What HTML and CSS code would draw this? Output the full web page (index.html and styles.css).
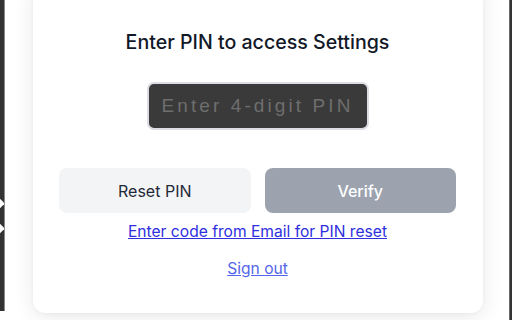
FILE: index.html
```html
<!DOCTYPE html>
<html>
<head>
<meta charset="utf-8">
<link rel="stylesheet" href="styles.css">
</head>
<body>
<div class="frame">
  <div class="edge-left">
    <span class="knob knob-a"></span>
    <span class="knob knob-b"></span>
  </div>
  <main class="stage">
    <section class="card">
      <h1 class="title">Enter PIN to access Settings</h1>
      <input class="pin" type="password" placeholder="Enter 4-digit PIN">
      <div class="actions">
        <button class="btn btn-reset">Reset PIN</button>
        <button class="btn btn-verify">Verify</button>
      </div>
      <a class="link link-email" href="#">Enter code from Email for PIN reset</a>
      <a class="link link-signout" href="#">Sign out</a>
    </section>
  </main>
  <div class="edge-right"></div>
</div>
</body>
</html>
```
FILE: styles.css
```css
* { box-sizing: border-box; }
html, body { margin: 0; padding: 0; }
body {
  width: 512px;
  height: 320px;
  overflow: hidden;
  background: #ffffff;
  font-family: Inter, "Noto Sans", "Liberation Sans", sans-serif;
}
.frame {
  display: flex;
  height: 320px;
}
.edge-left {
  position: relative;
  width: 5px;
  height: 311px;
  background: #333333;
  border-right: 1px solid #8a8a8a;
  overflow: hidden;
  flex-shrink: 0;
}
.knob {
  position: absolute;
  left: -6px;
  width: 9px;
  height: 9px;
  background: #ffffff;
  transform: rotate(45deg);
}
.knob-a { top: 199px; }
.knob-b { top: 224px; }
.edge-right {
  width: 3px;
  background: #333333;
  border-left: 1px solid #6a6a6a;
  flex-shrink: 0;
}
.stage {
  flex: 1;
  padding-left: 28px;
}
.card {
  width: 450px;
  margin-top: -20px;
  padding: 49px 27px 33px 26px;
  background: #ffffff;
  border-radius: 12px;
  box-shadow: 0 4px 22px rgba(0, 0, 0, 0.09), 0 1px 4px rgba(0, 0, 0, 0.04);
  display: flex;
  flex-direction: column;
  align-items: center;
}
.title {
  margin: 0;
  font-size: 19.6px;
  line-height: 26px;
  font-weight: 500;
  color: #111827;
}
.pin {
  margin-top: 27px;
  width: 222px;
  height: 48px;
  background: #3a3a3a;
  border: 2px solid #dcdde2;
  border-radius: 7px;
  padding: 0 10px;
  font-family: "Liberation Sans", Arial, sans-serif;
  font-size: 19px;
  letter-spacing: 3.1px;
  color: #e5e5e5;
  text-align: center;
  outline: none;
}
.pin::placeholder { color: #6e6e6e; }
.actions {
  margin-top: 38px;
  width: 100%;
  display: flex;
  gap: 14px;
}
.btn {
  flex: 1;
  height: 45px;
  border: none;
  border-radius: 8px;
  font-family: inherit;
  font-size: 16px;
  font-weight: 400;
}
.btn-reset { background: #f3f4f6; color: #1f2937; }
.btn-verify { background: #9ca3af; color: #ffffff; font-weight: 500; }
.link {
  font-size: 15.6px;
  line-height: 22px;
  text-decoration: underline;
}
.link-email { margin-top: 8px; color: #2f2fde; }
.link-signout { margin-top: 15px; color: #5366e9; }
```
